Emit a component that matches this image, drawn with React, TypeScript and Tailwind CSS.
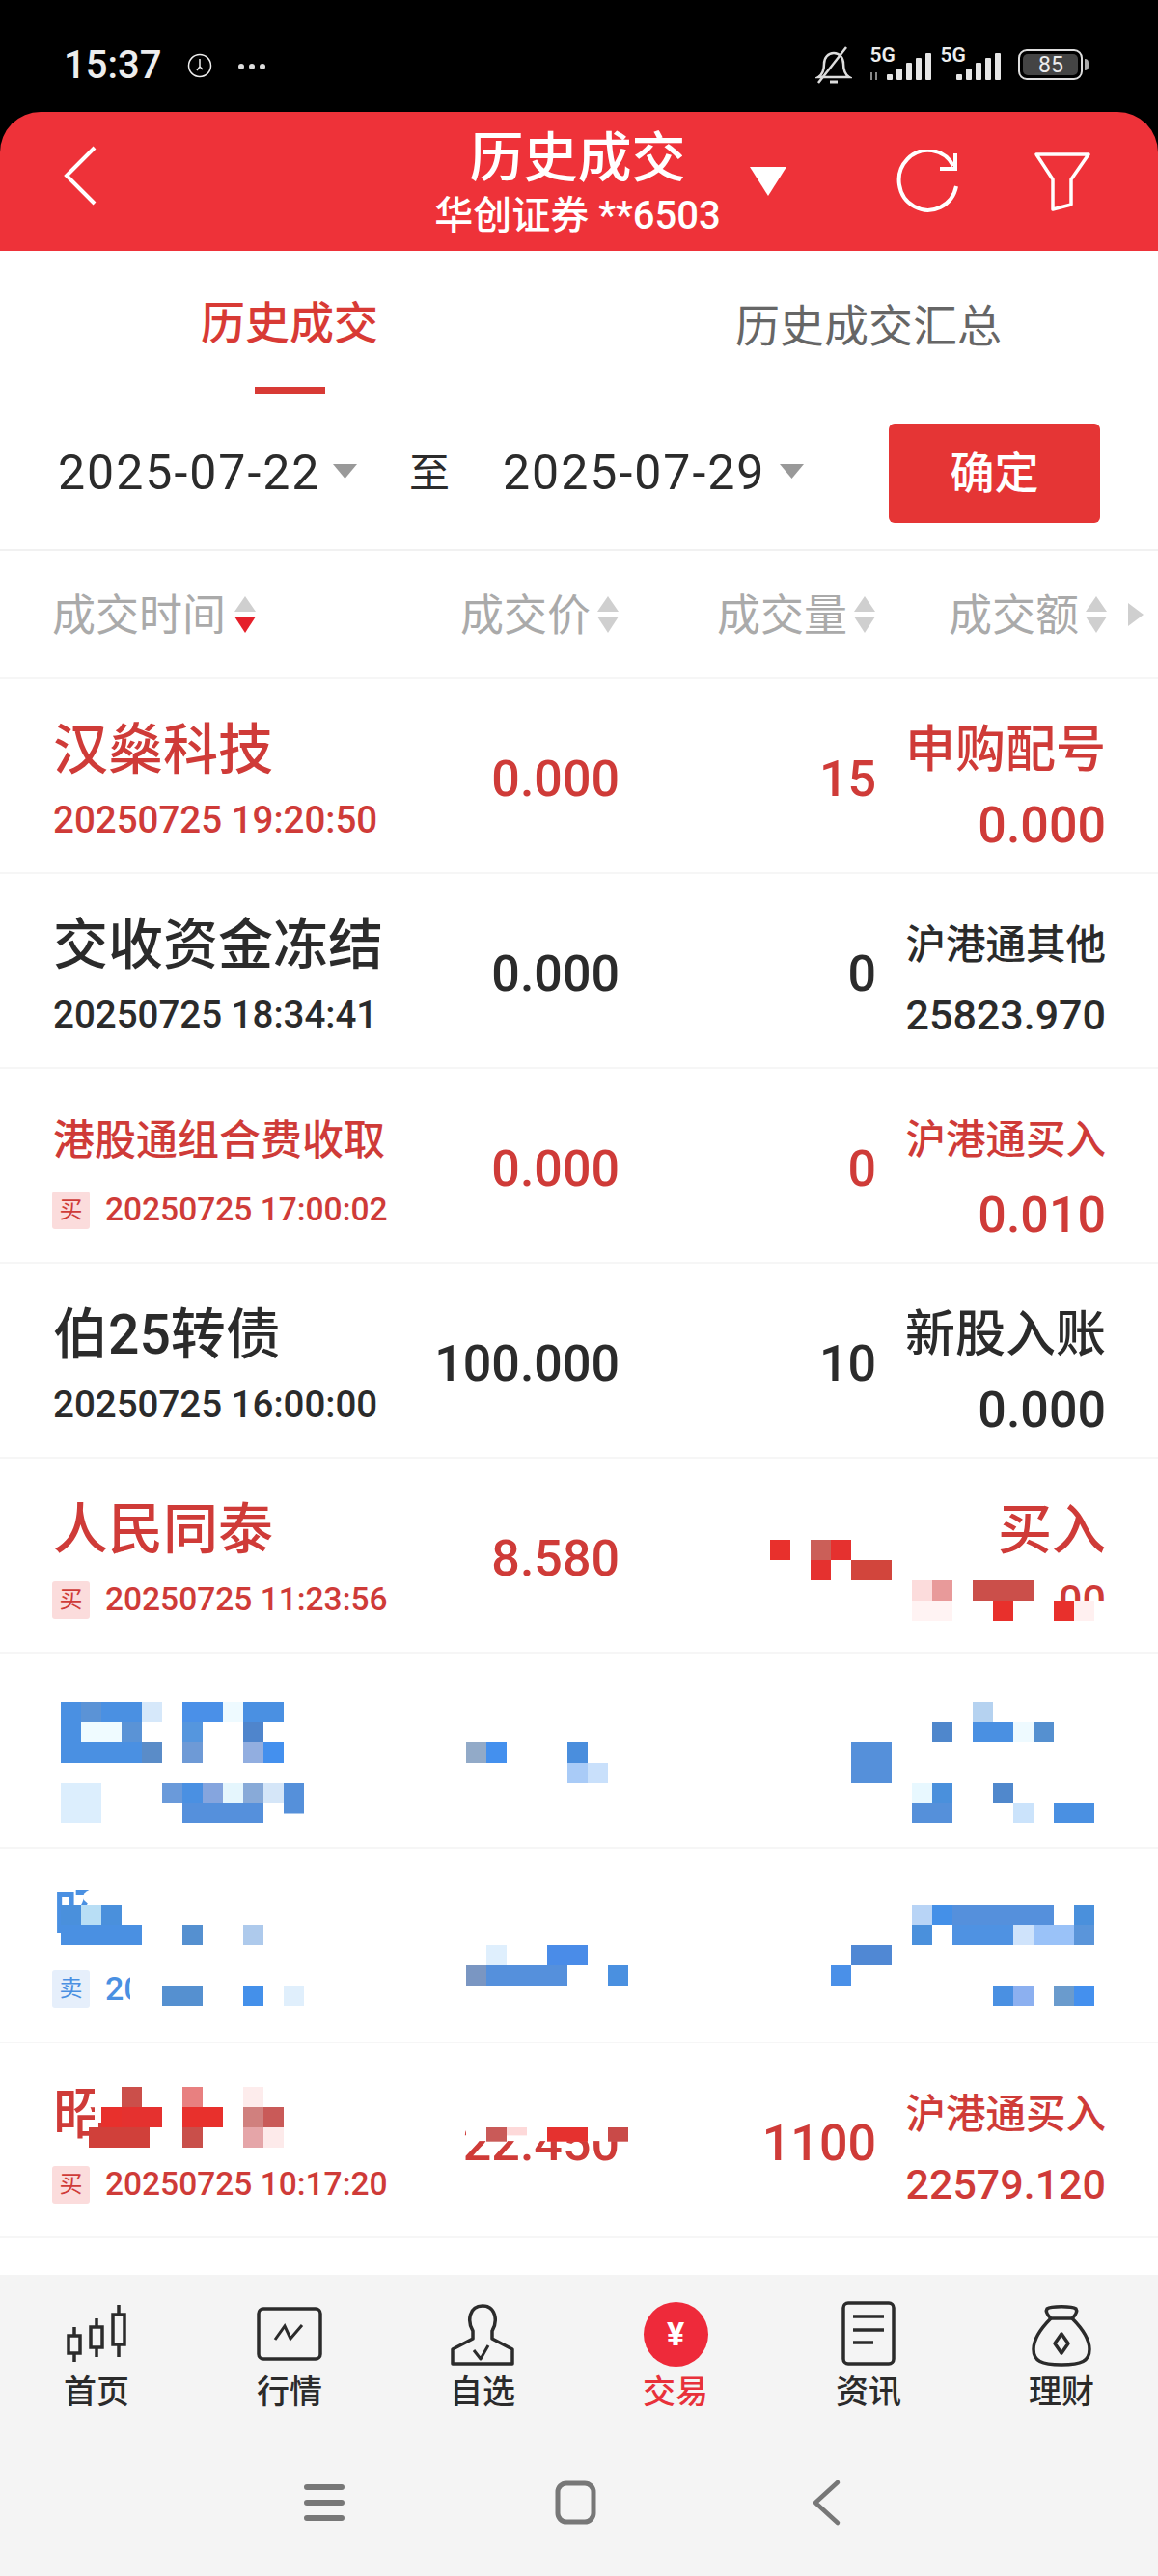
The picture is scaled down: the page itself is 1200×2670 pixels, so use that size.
import React from 'react'

type Row = {
  name: React.ReactNode
  nameClass: string
  date: string
  side?: '买' | '卖'
  price: string
  volume: string
  label: string
  labelClass: string
  value: string
  valueClass: string
  color: string
}

const rows: Row[] = [
  { name: '汉燊科技', nameClass: 'text-[57px]', date: '20250725 19:20:50', price: '0.000', volume: '15', label: '申购配号', labelClass: 'text-[52px]', value: '0.000', valueClass: 'text-[52px] mt-[6px]', color: 'text-[#cf3b38]' },
  { name: '交收资金冻结', nameClass: 'text-[57px]', date: '20250725 18:34:41', price: '0.000', volume: '0', label: '沪港通其他', labelClass: 'text-[41.500px]', value: '25823.970', valueClass: 'text-[43px]', color: 'text-[#2b2b2b]' },
  { name: '港股通组合费收取', nameClass: 'text-[43px]', date: '20250725 17:00:02', side: '买', price: '0.000', volume: '0', label: '沪港通买入', labelClass: 'text-[41.500px]', value: '0.010', valueClass: 'text-[52px] mt-[6px]', color: 'text-[#cf3b38]' },
  { name: '伯25转债', nameClass: 'text-[57px]', date: '20250725 16:00:00', price: '100.000', volume: '10', label: '新股入账', labelClass: 'text-[52px]', value: '0.000', valueClass: 'text-[52px] mt-[6px]', color: 'text-[#2b2b2b]' },
  { name: '人民同泰', nameClass: 'text-[57px]', date: '20250725 11:23:56', side: '买', price: '8.580', volume: '', label: '买入', labelClass: 'text-[56px]', value: '00', valueClass: 'text-[43px]', color: 'text-[#cf3b38]' },
]

// mosaic cells in page coordinates: x, y, columns, rows, colour
const mosaic: [number, number, number, number, string][] = [
  // row 5
  [945, 1638, 7, 2, '#ffffff'], [1092, 1659, 3, 1, '#ffffff'],
  [798, 1596, 1, 1, '#e8302c'], [840, 1596, 1, 1, '#cb5f58'], [861, 1596, 1, 1, '#e5312f'], [840, 1617, 1, 1, '#e5312f'], [882, 1617, 2, 1, '#d2453c'],
  [945, 1638, 1, 1, '#fcdcdc'], [966, 1638, 1, 1, '#e89a9a'], [1008, 1638, 3, 1, '#cb4f4a'], [945, 1659, 2, 1, '#fff3f3'], [1029, 1659, 1, 1, '#e8302c'], [1092, 1659, 1, 1, '#e8302c'], [1113, 1659, 1, 1, '#fff0f0'],
  // row 6
  [63, 1764, 4, 1, '#4a90e2'], [84, 1764, 1, 1, '#5b93d6'], [147, 1764, 1, 1, '#d6e8fa'], [189, 1764, 2, 1, '#4a90e8'], [231, 1764, 1, 1, '#eefaff'], [252, 1764, 2, 1, '#4a90e2'],
  [63, 1785, 1, 1, '#4a90e2'], [84, 1785, 2, 1, '#effbff'], [126, 1785, 1, 1, '#5a93d6'], [189, 1785, 1, 1, '#5596de'], [252, 1785, 1, 1, '#4f85cc'],
  [63, 1806, 4, 1, '#4a90e2'], [147, 1806, 1, 1, '#5a8cc8'], [189, 1806, 1, 1, '#6e9ad6'], [252, 1806, 1, 1, '#92aee0'], [273, 1806, 1, 1, '#4490ee'],
  [63, 1848, 2, 2, '#dceefd'], [168, 1848, 1, 1, '#6a9ada'], [189, 1848, 1, 1, '#4a90e2'], [210, 1848, 1, 1, '#85a5de'], [231, 1848, 1, 1, '#e5f6fd'], [252, 1848, 1, 1, '#88aad8'], [273, 1848, 1, 1, '#d5e6f8'], [294, 1848, 1, 1, '#5590da'], [294, 1869, 1, 0.5, '#5590da'],
  [189, 1869, 4, 1, '#5590dc'],
  [483, 1806, 1, 1, '#92aac8'], [504, 1806, 1, 1, '#4490ee'], [588, 1806, 1, 1, '#4a8edd'], [588, 1827, 1, 1, '#a9cbf7'], [609, 1827, 1, 1, '#c9e0fb'],
  [1008, 1764, 1, 1, '#b5d2f0'], [966, 1785, 1, 1, '#4f87cc'], [1008, 1785, 2, 1, '#4a90e2'], [1050, 1785, 1, 1, '#eefaff'], [1071, 1785, 1, 1, '#5590d0'],
  [882, 1806, 2, 2, '#5590da'],
  [945, 1848, 1, 1, '#e8f8ff'], [966, 1848, 1, 1, '#4a90dc'], [1029, 1848, 1, 1, '#5088cc'], [945, 1869, 2, 1, '#5590da'], [1050, 1869, 1, 1, '#cbe3fb'], [1092, 1869, 2, 1, '#4a90e2'],
  // row 7
  [135, 2038, 2, 2, '#ffffff'],
  [63, 1974, 1, 1, '#4a90dc'], [84, 1974, 1, 1, '#b8def5'], [105, 1974, 1, 1, '#4a90dc'], [63, 1995, 4, 1, '#4a90e2'], [189, 1995, 1, 1, '#5590d0'], [252, 1995, 1, 1, '#aecaec'],
  [168, 2058, 2, 1, '#5590d0'], [252, 2058, 1, 1, '#4490ea'], [294, 2058, 1, 1, '#e0effc'],
  [504, 2016, 1, 1, '#dfeffd'], [567, 2016, 2, 1, '#4a8ce8'], [483, 2037, 1, 1, '#7a96c2'], [504, 2037, 4, 1, '#5590dc'], [630, 2037, 1, 1, '#4a90e0'],
  [945, 1974, 1, 1, '#b8d4f6'], [966, 1974, 1, 1, '#4490e8'], [987, 1974, 5, 1, '#5590dc'], [1113, 1974, 1, 1, '#4a90dc'],
  [945, 1995, 1, 1, '#4a90dc'], [987, 1995, 3, 1, '#4f92e2'], [1050, 1995, 1, 1, '#cfe3fb'], [1071, 1995, 2, 1, '#9ac2f8'], [1113, 1995, 1, 1, '#5a95da'],
  [882, 2016, 2, 1, '#5088d4'], [861, 2037, 1, 1, '#4a90e8'],
  [1029, 2058, 1, 1, '#4a90e2'], [1050, 2058, 1, 1, '#8cb0f0'], [1092, 2058, 1, 1, '#6a9bcd'], [1113, 2058, 1, 1, '#4490ee'],
  // row 8
  [483, 2196, 8, 1.1, '#ffffff'], [504, 2205, 1, 0.7, '#c95a58'], [525, 2205, 1, 0.4, '#fdd9d9'], [567, 2205, 2, 0.7, '#e5312f'], [630, 2205, 1, 0.7, '#c94a48'],
  [98, 2158, 28, 2, '#ffffff'],
  [126, 2163, 1, 1, '#cb4f4a'], [189, 2163, 1, 1, '#e88080'], [252, 2163, 1, 1, '#fdecec'],
  [105, 2184, 1, 1, '#e8302c'], [126, 2184, 2, 1, '#e5312f'], [189, 2184, 2, 1, '#e8302c'], [252, 2184, 1, 1, '#d0807e'], [273, 2184, 1, 1, '#c95a58'],
  [92, 2205, 3, 1, '#d0403a'], [189, 2205, 1, 1, '#c94f4a'], [252, 2205, 1, 1, '#e5a5a8'], [273, 2205, 1, 1, '#fdeaea'],
]

function SortArrows({ active }: { active?: boolean }) {
  return (
    <svg className="ml-[4px] mt-[-3px] h-[38px] w-[22px]" viewBox="0 0 22 38">
      <path d="M11 0L22 16H0z" fill="#cfcfcf" />
      <path d="M11 38L22 21H0z" fill={active ? '#e5202a' : '#cfcfcf'} />
    </svg>
  )
}

function Caret() {
  return (
    <svg className="ml-[17px] mt-[-4px] h-[15px] w-[25px]" viewBox="0 0 25 15">
      <path d="M0 0H25L12.500 15z" fill="#999" />
    </svg>
  )
}

function TradeRow({ row }: { row: Row }) {
  return (
    <div className={`grid h-[202px] grid-cols-[387px_200px_266px_238px] border-b-2 border-[#f6f6f6] pl-[55px] font-medium ${row.color}`}>
      <div className="flex flex-col pt-[38px]">
        <div className={`h-[72px] whitespace-nowrap leading-[72px] ${row.nameClass}`}>{row.name}</div>
        {row.side ? (
          <div className="flex h-[72px] items-center">
            <span className="ml-[-1px] flex h-[39px] w-[39px] items-center justify-center rounded-[3px] bg-[#fbdcdc] text-[24px] font-normal">{row.side}</span>
            <span className="ml-[16px] whitespace-nowrap text-[33.500px]">{row.date}</span>
          </div>
        ) : (
          <div className="h-[72px] whitespace-nowrap text-[38.500px] leading-[72px]">{row.date}</div>
        )}
      </div>
      <div className="pt-[68px] text-right text-[52px] leading-[72px]">{row.price}</div>
      <div className="pt-[68px] text-right text-[52px] leading-[72px]">{row.volume}</div>
      <div className="flex flex-col items-end pt-[38px]">
        <div className={`h-[72px] whitespace-nowrap leading-[72px] ${row.labelClass}`}>{row.label}</div>
        <div className={`h-[72px] whitespace-nowrap leading-[72px] ${row.valueClass}`}>{row.value}</div>
      </div>
    </div>
  )
}

function NavItem({ label, active, children }: { label: string; active?: boolean; children: React.ReactNode }) {
  return (
    <div className="flex w-[200px] flex-col items-center">
      {children}
      <div className={`mt-[5px] text-[34px] font-medium leading-[40px] ${active ? 'text-[#e8313a]' : 'text-[#2b2b2b]'}`}>{label}</div>
    </div>
  )
}

export default function App() {
  return (
    <div className="flex h-[2670px] w-[1200px] flex-col overflow-hidden bg-black font-[Roboto,'Noto_Sans_CJK_SC',sans-serif]">
      {/* Status bar */}
      <div className="flex h-[116px] items-start pl-[66px] pt-[44px] text-[#ededed]">
        <span className="text-[40px] font-medium leading-[48px]">15:37</span>
        <svg className="ml-[27px] mt-[11px] h-[26px] w-[26px]" viewBox="0 0 26 26" fill="none" stroke="#eee" strokeWidth="1.500">
          <circle cx="13" cy="13" r="11.500" />
          <path d="M13 6v8l-3 4M13 14l3 3" />
        </svg>
        <div className="ml-[27px] mt-[22px] flex gap-[5px]">
          <span className="h-[6px] w-[6px] rounded-full bg-[#ddd]" />
          <span className="h-[6px] w-[6px] rounded-full bg-[#ddd]" />
          <span className="h-[6px] w-[6px] rounded-full bg-[#ddd]" />
        </div>
        <svg className="ml-[570px] mt-[4px] h-[40px] w-[38px]" viewBox="0 0 38 40" fill="none" stroke="#ddd" strokeWidth="2.500">
          <path d="M3 32c5-3 6-8 6-14 0-6 4-11 10-11s10 5 10 11c0 6 1 11 6 14z" />
          <path d="M32 1L3 38" />
          <path d="M15 37h8" strokeWidth="3" />
        </svg>
        <div className="relative ml-[18px] mt-[6px] h-[34px] w-[64px]">
          <span className="absolute left-0 top-[-4px] text-[21px] font-semibold leading-[22px]">5G</span>
          <svg className="absolute left-0 top-0 h-[34px] w-[64px]" viewBox="0 0 64 34" fill="#e5e5e5">
            <rect x="1" y="25" width="2" height="8" fill="#888" />
            <rect x="6" y="25" width="2" height="8" fill="#888" />
            <rect x="18" y="27" width="6" height="6" rx="1" />
            <rect x="28" y="21" width="6" height="12" rx="1" />
            <rect x="38" y="15" width="6" height="18" rx="1" />
            <rect x="48" y="10" width="6" height="23" rx="1" />
            <rect x="58" y="5" width="6" height="28" rx="1" />
          </svg>
        </div>
        <div className="relative ml-[9px] mt-[6px] h-[34px] w-[64px]">
          <span className="absolute left-0 top-[-4px] text-[21px] font-semibold leading-[22px]">5G</span>
          <svg className="absolute left-0 top-0 h-[34px] w-[64px]" viewBox="0 0 64 34" fill="#e5e5e5">
            <rect x="17" y="27" width="6" height="6" rx="1" />
            <rect x="27" y="21" width="6" height="12" rx="1" />
            <rect x="37" y="15" width="6" height="18" rx="1" />
            <rect x="47" y="10" width="6" height="23" rx="1" />
            <rect x="57" y="5" width="6" height="28" rx="1" />
          </svg>
        </div>
        <div className="ml-[17px] mt-[7px] flex items-center">
          <div className="flex h-[32px] w-[67px] items-center justify-center rounded-[9px] border-2 border-[#ddd] p-[3px]">
            <div className="flex h-full w-full items-center justify-center rounded-[5px] bg-[#444] text-[23px] leading-none">85</div>
          </div>
          <div className="ml-[2px] h-[12px] w-[4px] rounded-r-full bg-[#aaa]" />
        </div>
      </div>

      {/* Title bar */}
      <div className="grid h-[144px] grid-cols-[451px_295px_1fr] rounded-t-[42px] bg-[#ee3239] text-white">
        <div className="flex items-center pl-[65px]">
          <svg className="mt-[-12px] h-[62px] w-[36px]" viewBox="0 0 36 62" fill="none" stroke="#fff" strokeWidth="4">
            <path d="M33 2L4 31l29 29" />
          </svg>
        </div>
        <div className="flex flex-col items-center">
          <div className="mt-[18px] whitespace-nowrap text-[56px] font-medium leading-[60px]">历史成交</div>
          <div className="mt-[8px] whitespace-nowrap text-[40px] font-medium leading-[44px]">华创证券 **6503</div>
        </div>
        <div className="flex items-start">
          <svg className="ml-[31px] mt-[57px] h-[30px] w-[38px]" viewBox="0 0 38 30">
            <path d="M0 0H38L19 30z" fill="#fff" />
          </svg>
          <svg className="ml-[114px] mt-[39px] h-[68px] w-[66px]" viewBox="0 0 66 68" fill="none" stroke="#fff" strokeWidth="4">
            <path d="M59 17A30 31 0 1 0 62 38" />
            <path d="M61 4v16H45" />
          </svg>
          <svg className="ml-[76px] mt-[40px] h-[64px] w-[60px]" viewBox="0 0 60 64" fill="none" stroke="#fff" strokeWidth="3.500" strokeLinejoin="round">
            <path d="M3 4h54L39 30v26l-19 5V30z" />
          </svg>
        </div>
      </div>

      <div className="flex flex-1 flex-col bg-white">
        {/* Tabs */}
        <div className="grid h-[148px] shrink-0 grid-cols-2 text-[46px] leading-[60px]">
          <div className="flex flex-col items-center pt-[45px] text-[#d83a35]">
            <span className="font-medium">历史成交</span>
            <span className="mt-[36px] h-[7px] w-[73px] bg-[#d83a35]" />
          </div>
          <div className="flex flex-col items-center pt-[48px] text-[#666]">
            <span>历史成交汇总</span>
          </div>
        </div>

        {/* Date range */}
        <div className="flex h-[163px] shrink-0 items-center border-b-2 border-[#f1f1f1] pl-[60px] pt-[3px] text-[#2b2b2b]">
          <span className="w-[268px] whitespace-nowrap text-[50px] leading-[60px] tracking-[2px]">2025-07-22</span>
          <Caret />
          <span className="ml-[54px] text-[42px]">至</span>
          <span className="ml-[55px] w-[270px] whitespace-nowrap text-[50px] leading-[60px] tracking-[2px]">2025-07-29</span>
          <Caret />
          <button className="ml-auto mr-[60px] h-[103px] w-[219px] rounded-[6px] bg-[#e53535] text-[46px] font-medium text-white">确定</button>
        </div>

        {/* Column heads */}
        <div className="flex h-[133px] shrink-0 items-center border-b-2 border-[#f6f6f6] pl-[54px] pt-[4px] text-[45px] text-[#aaaaaa]">
          <span className="w-[185px] whitespace-nowrap">成交时间</span>
          <SortArrows active />
          <span className="ml-[212px] w-[138px] whitespace-nowrap">成交价</span>
          <SortArrows />
          <span className="ml-[102px] w-[138px] whitespace-nowrap">成交量</span>
          <SortArrows />
          <span className="ml-[76px] w-[138px] whitespace-nowrap">成交额</span>
          <SortArrows />
          <svg className="ml-[22px] mt-[-3px] h-[24px] w-[16px]" viewBox="0 0 16 24">
            <path d="M0 0L16 12 0 24z" fill="#cfcfcf" />
          </svg>
        </div>

        {/* Trades */}
        <div className="relative shrink-0">
          {rows.map((row, i) => (
            <TradeRow key={i} row={row} />
          ))}
          <TradeRow row={{ name: '', nameClass: 'text-[57px]', date: '', price: '', volume: '', label: '', labelClass: 'text-[41px]', value: '', valueClass: 'text-[43px]', color: 'text-[#4a90e2]' }} />
          <div className="grid h-[202px] grid-cols-[385px_1fr] border-b-2 border-[#f6f6f6] pl-[55px] text-[#4a90e2]">
            <div className="flex flex-col pt-[34px]">
              <div className="h-[72px] text-[57px] font-medium leading-[72px]">昭</div>
              <div className="flex h-[72px] items-center pt-[6px]">
                <span className="ml-[-1px] flex h-[39px] w-[39px] items-center justify-center rounded-[3px] bg-[#e6effb] text-[24px]">卖</span>
                <span className="ml-[16px] whitespace-nowrap text-[34px] font-medium">20</span>
              </div>
            </div>
          </div>
          <TradeRow
            row={{ name: '昭', nameClass: 'text-[57px]', date: '20250725 10:17:20', side: '买', price: '22.450', volume: '1100', label: '沪港通买入', labelClass: 'text-[41.500px]', value: '22579.120', valueClass: 'text-[43px]', color: 'text-[#cf3b38]' }}
          />
          {/* Privacy mosaic painted over the rows */}
          <svg className="absolute left-0 top-0 h-[1616px] w-[1200px]" viewBox="0 704 1200 1616">
            <ellipse cx="108" cy="1966" rx="22" ry="10" fill="#fff" />
            {mosaic.map(([x, y, w, h, fill], i) => (
              <rect key={i} x={x} y={y} width={w * 21} height={h * 21} fill={fill} />
            ))}
          </svg>
        </div>

        {/* Bottom navigation */}
        <div className="mt-[38px] flex flex-1 flex-col bg-[#f4f4f4] pt-[26px]">
          <div className="flex">
            <NavItem label="首页">
              <svg className="h-[70px] w-[70px]" viewBox="65 2385 70 70" fill="none" stroke="#2b2b2b" strokeWidth="3.500">
                <rect x="71" y="2422" width="12" height="18" />
                <path d="M77 2413v9M77 2440v9" />
                <rect x="94" y="2413" width="12" height="21" />
                <path d="M100 2404v9M100 2434v10" />
                <rect x="117" y="2400" width="12" height="31" />
                <path d="M123 2390v10M123 2431v13" />
              </svg>
            </NavItem>
            <NavItem label="行情">
              <svg className="h-[70px] w-[70px]" viewBox="265 2385 70 70" fill="none" stroke="#2b2b2b" strokeWidth="3.500">
                <rect x="268" y="2394" width="64" height="52" rx="5" />
                <path d="M285 2426l10-14 6 13 12-14" strokeWidth="3" />
              </svg>
            </NavItem>
            <NavItem label="自选">
              <svg className="h-[70px] w-[70px]" viewBox="465 2385 70 70" fill="none" stroke="#2b2b2b" strokeWidth="3.500" strokeLinejoin="round">
                <path d="M490 2417c-6-10-4-26 10-26s16 16 10 26v8l21 11v15h-62v-15l21-11z" />
                <path d="M491 2437l7 9 8-14" strokeWidth="3" />
              </svg>
            </NavItem>
            <NavItem label="交易" active>
              <div className="flex h-[70px] w-[70px] items-center justify-center">
                <span className="flex h-[67px] w-[67px] items-center justify-center rounded-full bg-[#ee2a3a] text-[34px] font-bold text-white">¥</span>
              </div>
            </NavItem>
            <NavItem label="资讯">
              <svg className="h-[70px] w-[70px]" viewBox="865 2385 70 70" fill="none" stroke="#2b2b2b" strokeWidth="3.500">
                <rect x="874" y="2388" width="52" height="63" rx="5" />
                <path d="M884 2402h32M884 2416h32M884 2429h21" />
              </svg>
            </NavItem>
            <NavItem label="理财">
              <svg className="h-[70px] w-[70px]" viewBox="1065 2385 70 70" fill="none" stroke="#2b2b2b" strokeWidth="3.500" strokeLinejoin="round">
                <path d="M1089 2404c-4-4-6-7-4-10 4-3 26-3 30 0 2 3 0 6-4 10z" />
                <path d="M1089 2404c-10 10-18 22-18 32 0 12 8 16 29 16s29-4 29-16c0-10-8-22-18-32" />
                <path d="M1100 2420l7 10-7 10-7-10z" />
              </svg>
            </NavItem>
          </div>

          {/* System buttons */}
          <div className="mt-[70px] flex justify-center gap-[210px] pr-[8px]">
            <svg className="h-[50px] w-[50px]" viewBox="0 0 50 50" fill="none" stroke="#777" strokeWidth="6" strokeLinecap="round">
              <path d="M7 9h36M7 25h36M7 41h36" />
            </svg>
            <svg className="h-[50px] w-[50px]" viewBox="0 0 50 50" fill="none" stroke="#777" strokeWidth="5">
              <rect x="7" y="5" width="37" height="40" rx="9" />
            </svg>
            <svg className="h-[50px] w-[50px]" viewBox="0 0 50 50" fill="none" stroke="#777" strokeWidth="4.500" strokeLinecap="round" strokeLinejoin="round">
              <path d="M37 4L14 25l23 21" />
            </svg>
          </div>
        </div>
      </div>
    </div>
  )
}
